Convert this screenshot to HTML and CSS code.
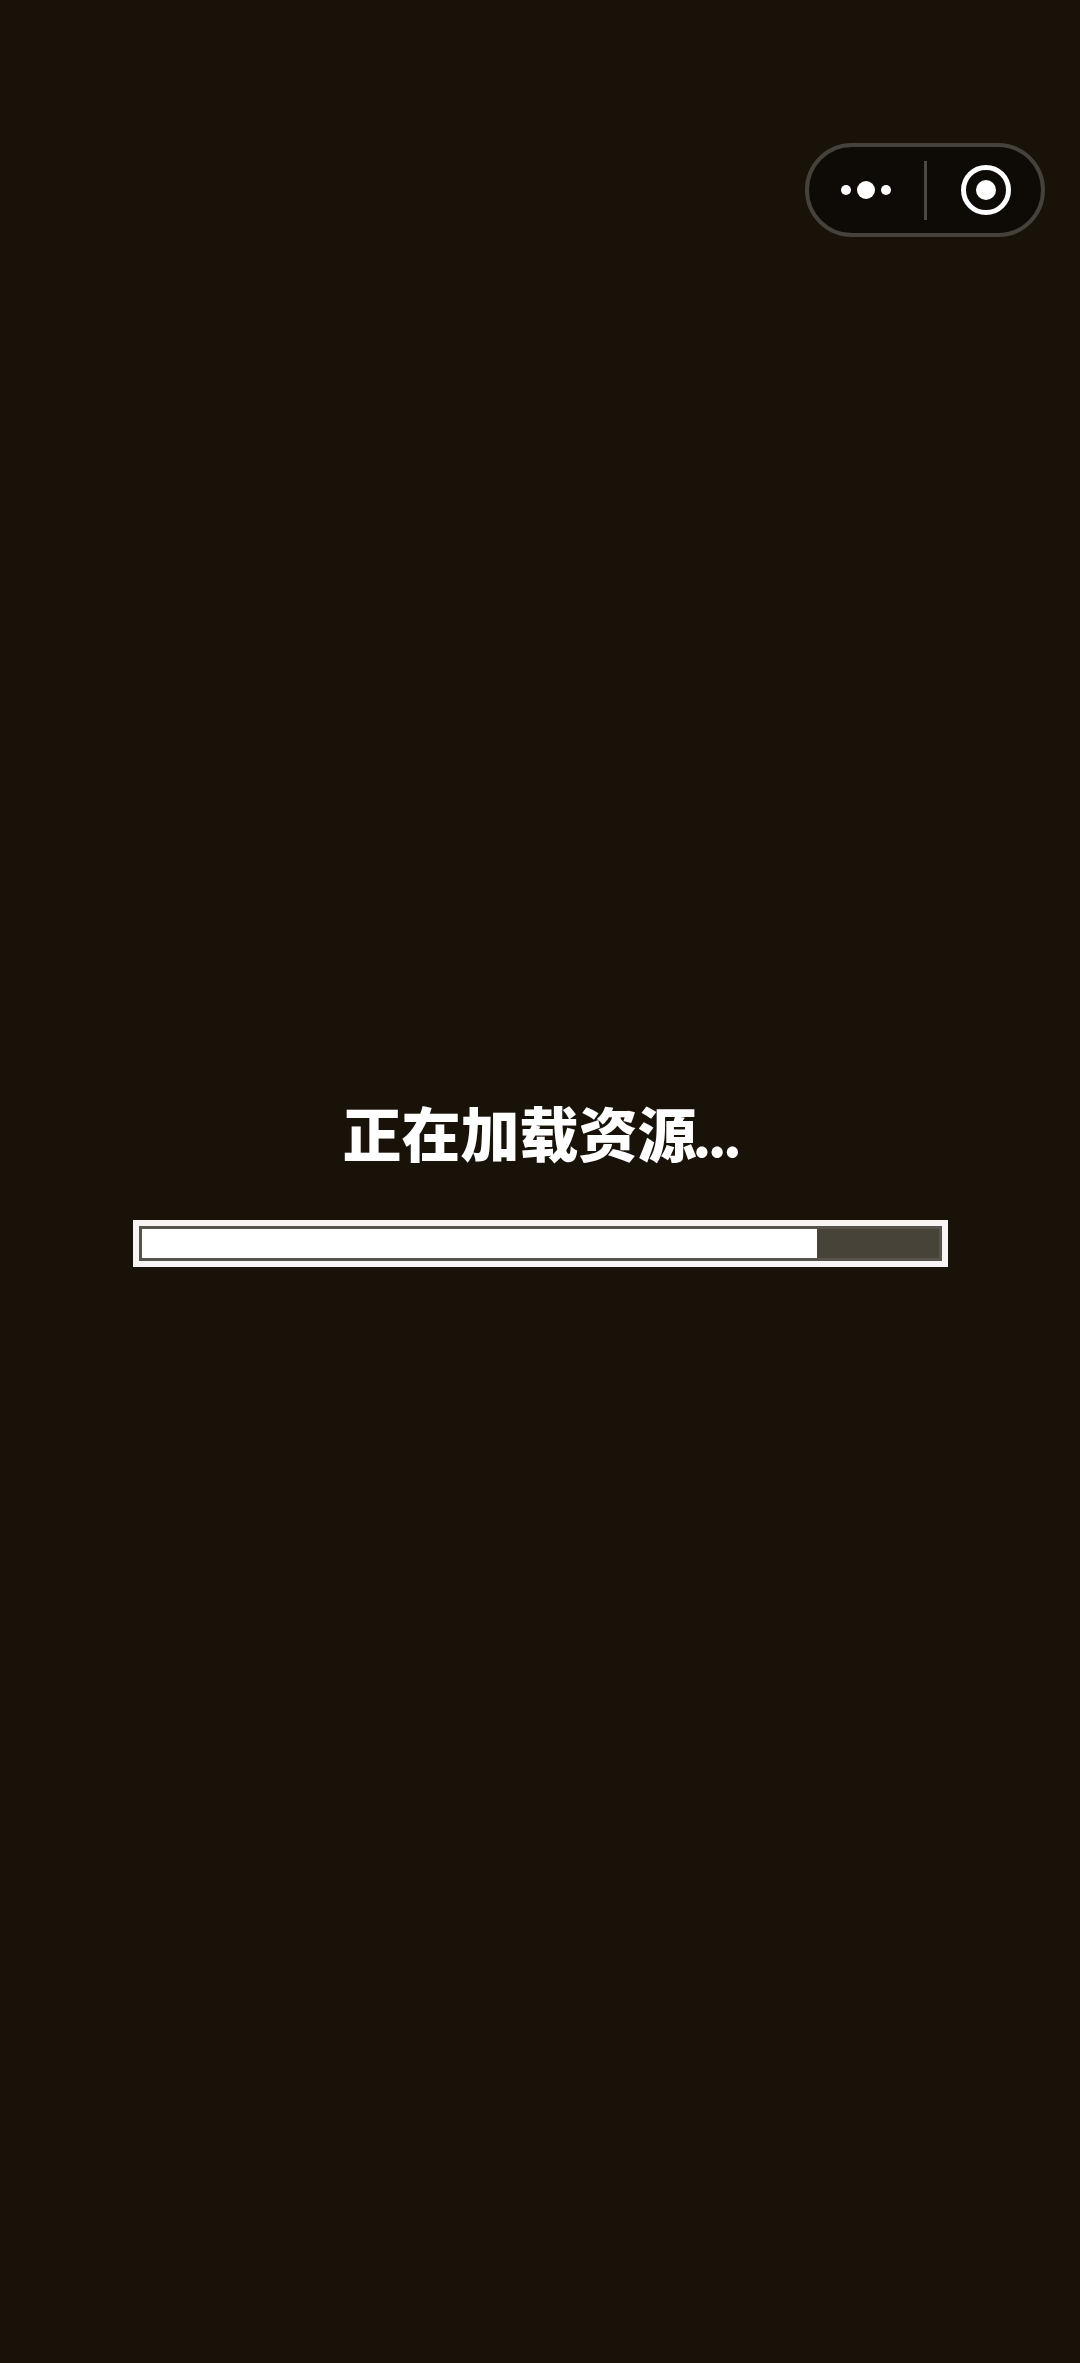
FILE: index.html
```html
<!DOCTYPE html>
<html lang="zh-CN">
<head>
<meta charset="utf-8">
<title>正在加载资源...</title>
<link rel="stylesheet" href="styles.css">
</head>
<body>
<div class="capsule">
  <div class="capsule-side">
    <svg class="more" width="56" height="20" viewBox="0 0 56 20"><circle cx="8" cy="10" r="5"/><circle cx="28" cy="10" r="9"/><circle cx="48" cy="10" r="5"/></svg>
  </div>
  <div class="capsule-divider"></div>
  <div class="capsule-side">
    <svg class="target" width="50" height="50" viewBox="0 0 50 50"><circle class="ring" cx="25" cy="25" r="22.5"/><circle cx="25" cy="25" r="10"/></svg>
  </div>
</div>
<main class="loader">
  <h1 class="title">正在加载资源<span class="dots">...</span></h1>
  <div class="bar">
    <div class="track"><div class="fill"></div></div>
  </div>
</main>
</body>
</html>
```
FILE: styles.css
```css
* { box-sizing: border-box; }
html, body { margin: 0; height: 100%; }
body {
  background: #181208;
  color: #fff;
  font-family: "Noto Sans CJK SC", "Noto Sans", sans-serif;
  overflow: hidden;
}
.capsule {
  position: absolute;
  left: 805px;
  top: 143px;
  width: 240px;
  height: 94px;
  display: flex;
  align-items: center;
  background: #0e0b07;
  border: 4px solid #45413b;
  border-radius: 47px;
}
.capsule-side {
  flex: 1;
  display: flex;
  justify-content: center;
  align-items: center;
}
.capsule-divider {
  width: 3px;
  height: 59px;
  background: #4b4741;
}
.more circle { fill: #fff; }
.target { fill: #fff; margin-left: 5px; }
.target .ring { fill: none; stroke: #fff; stroke-width: 5; }
.loader {
  display: flex;
  flex-direction: column;
  align-items: center;
  padding-top: 1090px;
}
.title {
  margin: 0;
  font-size: 59px;
  font-weight: 900;
  line-height: 84px;
  white-space: nowrap;
}
.dots {
  font-size: 52px;
  line-height: 0;
  letter-spacing: -3px;
  margin-left: -4px;
  margin-right: -1px;
}
.bar {
  margin-top: 46px;
  width: 815px;
  height: 47px;
  border: 6px solid #f6f5f3;
  background: #f6f5f3;
}
.track {
  height: 100%;
  background: #474339;
  border: 3px solid #57544e;
}
.fill {
  width: 84.8%;
  height: 100%;
  background: #fff;
}
```
